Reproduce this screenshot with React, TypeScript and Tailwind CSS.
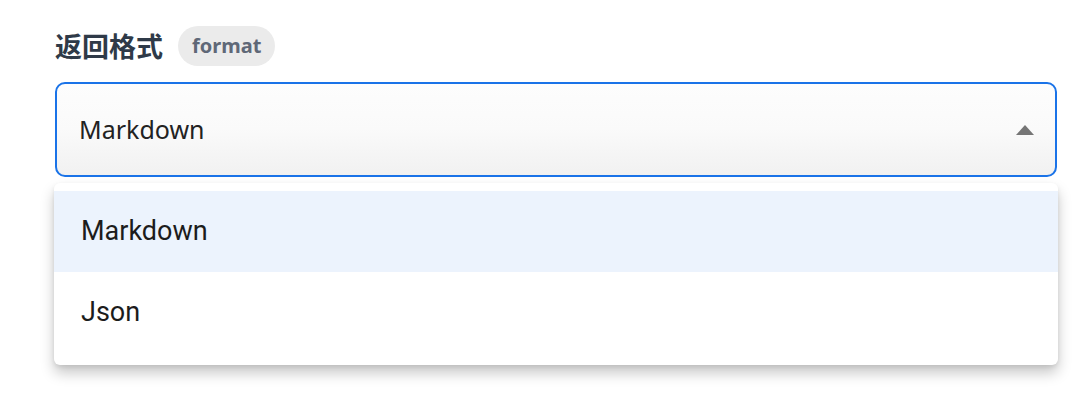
const options = ['Markdown', 'Json']

function Caret() {
  return (
    <svg width="18" height="10" viewBox="0 0 18 10" className="shrink-0">
      <path d="M9 0 L18 10 L0 10 Z" fill="#757575" />
    </svg>
  )
}

export default function App() {
  return (
    <div className="h-[420px] w-[1080px] bg-white pl-[55px] pt-[26px]">
      <div className="flex items-center gap-[15px]">
        <span className="font-['Noto_Sans_CJK_SC',sans-serif] text-[27px] leading-[40px] font-bold text-[#2f3a48]">
          返回格式
        </span>
        <span className="flex h-[40px] items-center rounded-full bg-[#ebebeb] px-[14px] font-['Noto_Sans',sans-serif] text-[20px] font-bold text-[#5f6877]">
          format
        </span>
      </div>

      <div className="relative mt-[16px] w-[1002px]">
        <div className="flex h-[95px] items-center justify-between rounded-[10px] border-2 border-[#1a73e8] bg-gradient-to-b from-[#fdfdfd] via-[#fafafa] to-[#f1f1f1] pr-[21px] pl-[22px]">
          <span className="font-['Noto_Sans',sans-serif] text-[25px] text-[#222]">Markdown</span>
          <Caret />
        </div>

        <div className="absolute top-[101px] -left-px w-[1004px] rounded-[6px] bg-white pt-[8px] pb-[12px] shadow-[0_8px_14px_rgba(0,0,0,0.22),0_2px_4px_rgba(0,0,0,0.08)]">
          {options.map((opt, i) => (
            <div
              key={opt}
              className={
                'flex h-[81px] items-center pl-[27px] font-[Roboto,sans-serif] text-[27px] text-[#1c1c1c] ' +
                (i === 0 ? 'bg-[#ecf3fd]' : '')
              }
            >
              {opt}
            </div>
          ))}
        </div>
      </div>
    </div>
  )
}
